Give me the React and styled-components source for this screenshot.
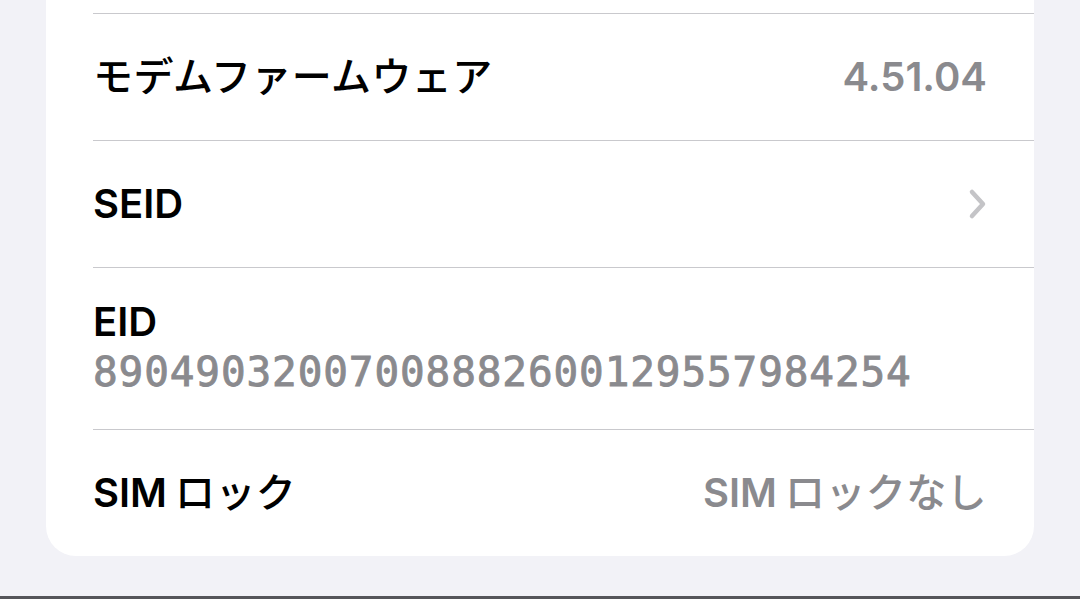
import React from "react";
import styled, { createGlobalStyle } from "styled-components";

const Global = createGlobalStyle`
  html, body { margin: 0; padding: 0; background: #f2f2f7; }
  body { font-family: "Inter", "Noto Sans CJK JP", sans-serif; -webkit-font-smoothing: antialiased; }
`;

const Page = styled.div`
  height: 599px;
  display: flex;
  flex-direction: column;
  background: #f2f2f7;
  overflow: hidden;
`;

const Content = styled.div`
  flex: 1;
  padding: 0 46px 0 46px;
`;

const Card = styled.div`
  width: 988px;
  background: #ffffff;
  border-radius: 0 0 30px 30px;
  padding-top: 13px;
`;

const Row = styled.div`
  margin-left: 47px;
  border-top: 1.5px solid #c9c9cd;
  height: ${(p) => p.$h}px;
  box-sizing: border-box;
  padding-right: 47px;
  display: flex;
  align-items: ${(p) => (p.$stack ? "stretch" : "center")};
  flex-direction: ${(p) => (p.$stack ? "column" : "row")};
  justify-content: ${(p) => (p.$stack ? "center" : "space-between")};
`;

const Label = styled.span`
  font-family: "Inter", "Noto Sans CJK JP", sans-serif;
  font-size: 40px;
  font-weight: 600;
  color: #000;
  line-height: 1.2;
`;

const Value = styled(Label)`
  color: #8a8a8e;
`;

const Kana = styled.span`
  font-weight: 500;
  letter-spacing: 0.4px;
  margin-left: ${(p) => p.$gap || 0}px;
`;

const Mono = styled.span`
  font-family: "DejaVu Sans Mono", monospace;
  font-size: 41px;
  font-weight: 400;
  color: #8a8a8e;
  -webkit-text-stroke: 0.9px #8a8a8e;
  letter-spacing: 0.9px;
  line-height: 1.3;
`;

const Chevron = styled.svg`
  width: 22px;
  height: 34px;
  margin-right: -2px;
`;

const BottomBar = styled.div`
  height: 3px;
  background: #55555a;
`;

export default function App() {
  return (
    <>
      <Global />
      <Page>
        <Content>
          <Card>
            <Row $h={127}>
              <Label><Kana>モデムファームウェア</Kana></Label>
              <Value>4.51.04</Value>
            </Row>
            <Row $h={127}>
              <Label>SEID</Label>
              <Chevron viewBox="0 0 22 34" fill="none">
                <path d="M5 5 L16 17 L5 29" stroke="#c4c4c7" strokeWidth="4.5" strokeLinecap="round" strokeLinejoin="round" />
              </Chevron>
            </Row>
            <Row $h={162} $stack>
              <Label>EID</Label>
              <Mono>89049032007008882600129557984254</Mono>
            </Row>
            <Row $h={127}>
              <Label>SIM<Kana $gap={8}>ロック</Kana></Label>
              <Value>SIM<Kana $gap={8}>ロックなし</Kana></Value>
            </Row>
          </Card>
        </Content>
        <BottomBar />
      </Page>
    </>
  );
}
